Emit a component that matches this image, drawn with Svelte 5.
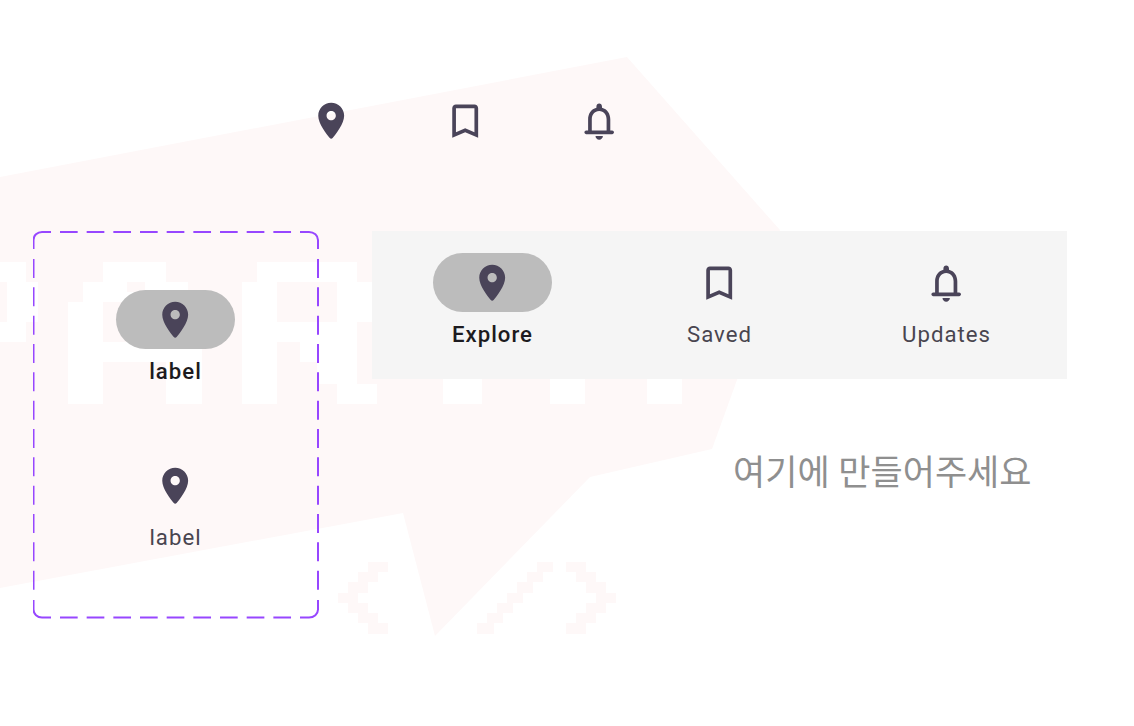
<script lang="ts">
  const pin = 'M12 2C8.13 2 5 5.13 5 9c0 4.17 4.42 9.92 6.24 12.11.4.48 1.13.48 1.53 0C14.58 18.92 19 13.17 19 9c0-3.87-3.13-7-7-7zm0 9.5c-1.38 0-2.5-1.12-2.5-2.5s1.12-2.5 2.5-2.5 2.5 1.12 2.5 2.5-1.12 2.5-2.5 2.5z'
  const bookmark = 'M17 3H7c-1.1 0-2 .9-2 2v16l7-3 7 3V5c0-1.1-.9-2-2-2zm0 15l-5-2.18L7 18V5h10v13z'
  const bell = 'M12 22c1.1 0 2-.9 2-2h-4c0 1.1.9 2 2 2zM18 17v-6c0-3.07-1.63-5.64-4.5-6.32V4c0-.83-.67-1.5-1.5-1.5s-1.5.67-1.5 1.5v.68C7.64 5.36 6 7.92 6 11v6H5c-.55 0-1 .45-1 1s.45 1 1 1h14c.55 0 1-.45 1-1s-.45-1-1-1h-1zm-2 0H8v-6c0-2.48 1.51-4.5 4-4.5s4 2.02 4 4.5v6z'

  const tabs = [
    { label: 'Explore', icon: pin, active: true },
    { label: 'Saved', icon: bookmark, active: false },
    { label: 'Updates', icon: bell, active: false }
  ]

  // decorative pixel lettering behind the page: x, y, w, h
  const white = [
    [0, 262, 26, 20], [7, 282, 31, 40], [0, 322, 26, 20],
    [103, 262, 63, 20], [83, 282, 105, 20], [68, 302, 35, 102], [166, 302, 36, 102], [103, 342, 63, 20],
    [257, 262, 100, 20], [242, 282, 35, 122], [337, 282, 35, 40], [277, 322, 80, 20], [300, 342, 57, 20],
    [317, 362, 40, 22], [337, 384, 40, 20],
    [443, 379, 39, 25], [550, 379, 35, 25], [647, 379, 35, 25]
  ]
  const brackets = [
    [368, 562, 20, 10], [358, 572, 20, 10], [348, 582, 20, 11], [338, 593, 20, 10], [348, 603, 20, 10], [358, 613, 20, 10], [368, 623, 20, 11],
    [537, 562, 16, 10], [527, 572, 16, 10], [517, 582, 16, 11], [507, 593, 16, 10], [497, 603, 16, 10], [487, 613, 16, 10], [477, 623, 17, 11],
    [566, 562, 20, 10], [576, 572, 20, 10], [586, 582, 20, 11], [596, 593, 20, 10], [586, 603, 20, 10], [576, 613, 20, 10], [566, 623, 20, 11]
  ]
</script>

{#snippet navItem(label: string, icon: string, active: boolean)}
  <div class="item" class:active>
    <div class="pill">
      <svg class="icon" viewBox="0 0 24 24"><path d={icon} fill-rule="evenodd" /></svg>
    </div>
    <span class="label">{label}</span>
  </div>
{/snippet}

<div class="page">
  <svg class="backdrop" width="1134" height="726" viewBox="0 0 1134 726">
    <polygon points="0,177 627,57 780,230 737,380 712,449 590,477 435,636 403,513 0,588" fill="#fef8f8" />
    {#each white as [x, y, w, h]}
      <rect {x} {y} width={w} height={h} fill="#fff" />
    {/each}
    <rect x="127" y="282" width="18" height="10" fill="#fef8f8" />
    {#each brackets as [x, y, w, h]}
      <rect {x} {y} width={w} height={h} fill="#fef8f8" />
    {/each}
  </svg>

  <div class="top-icons">
    {#each tabs as tab}
      <div class="top-icon">
        <svg class="icon" viewBox="0 0 24 24"><path d={tab.icon} fill-rule="evenodd" /></svg>
      </div>
    {/each}
  </div>

  <div class="content">
    <div class="variants">
      <svg class="dashes" width="286" height="388" viewBox="0 0 286 388">
        <path class="corner" d="M.5 18V9a8.5 8 0 0 1 8.5-8H18M267 1h9a9 8 0 0 1 9 8v9M285 369v9.5a9 8 0 0 1-9 8h-9M18 386.5H9a8.5 8 0 0 1-8.5-8V369" />
        <path class="run-h" d="M27 1H259M27 386.5H259" />
        <path class="run-v" d="M.5 28V360M285 28V360" />
      </svg>
      {@render navItem('label', pin, true)}
      {@render navItem('label', pin, false)}
    </div>

    <div class="right">
      <nav class="bar">
        {#each tabs as tab}
          {@render navItem(tab.label, tab.icon, tab.active)}
        {/each}
      </nav>
      <p class="note">여기에 만들어주세요</p>
    </div>
  </div>
</div>

<style>
  :global(body) {
    margin: 0;
    background: #fff;
  }

  .page {
    position: relative;
    width: 1134px;
    height: 726px;
    overflow: hidden;
    font-family: Roboto, 'Noto Sans CJK KR', sans-serif;
  }

  .backdrop {
    position: absolute;
    left: 0;
    top: 0;
  }

  .top-icons {
    position: relative;
    display: flex;
    padding: 99px 0 0 264px;
  }

  .top-icon {
    width: 134px;
    height: 44px;
    display: flex;
    justify-content: center;
  }

  .icon {
    width: 44.4px;
    height: 44.4px;
    fill: #4a4459;
    flex: none;
  }

  .content {
    position: relative;
    display: flex;
    gap: 53px;
    margin-top: 88px;
    padding-left: 33px;
    align-items: flex-start;
  }

  .variants {
    position: relative;
    box-sizing: border-box;
    width: 286px;
    height: 388px;
    padding: 59px 1px 0 0;
    display: flex;
    flex-direction: column;
    align-items: center;
    gap: 69px;
  }

  .dashes {
    position: absolute;
    left: 0;
    top: 0;
    fill: none;
    stroke: #9747ff;
    stroke-width: 2;
  }

  .run-h {
    stroke-dasharray: 17.67 9;
  }

  .run-v {
    stroke-dasharray: 19 9.33;
  }

  .item {
    display: flex;
    flex-direction: column;
    align-items: center;
    gap: 8.4px;
    width: 227px;
  }

  .pill {
    box-sizing: border-box;
    width: 119px;
    height: 59px;
    padding-top: 1px;
    border-radius: 30px;
    display: flex;
    align-items: center;
    justify-content: center;
  }

  .active .pill {
    background: #bcbcbc;
  }

  .label {
    font-size: 22.2px;
    line-height: 29.6px;
    font-weight: 400;
    letter-spacing: 1px;
    color: #49454f;
  }

  .active .label {
    color: #1d1b20;
    font-weight: 500;
  }

  .bar {
    width: 695px;
    height: 148px;
    box-sizing: border-box;
    padding: 22px 7px 0;
    background: #f5f5f5;
    display: flex;
  }

  .note {
    margin: 72px 0 0 361px;
    font-size: 35px;
    line-height: 46px;
    font-weight: 400;
    color: #8f8f8f;
    white-space: nowrap;
  }
</style>
